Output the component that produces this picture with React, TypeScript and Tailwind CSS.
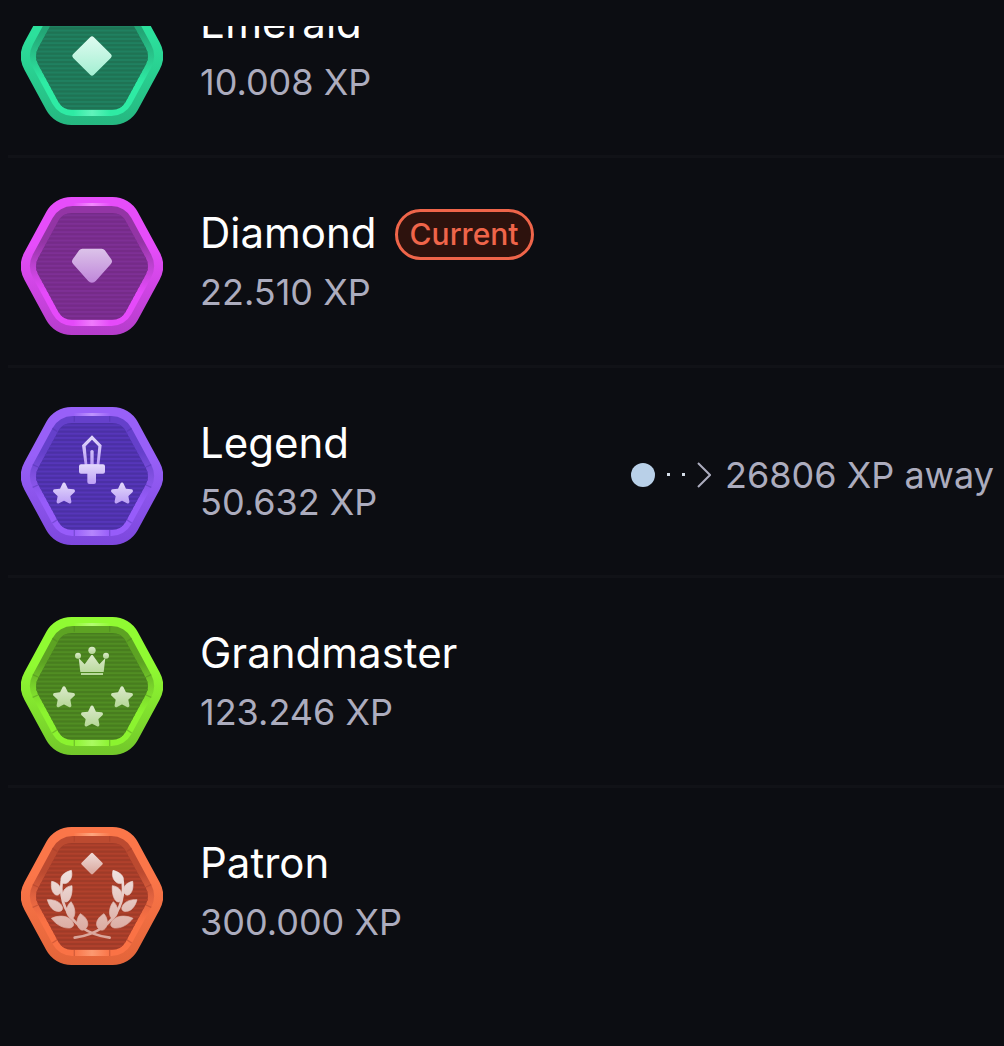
import React from "react";

type Point = [number, number];

interface Palette {
  rimTop: string;
  rimBottom: string;
  bevelTop: string;
  bevelBottom: string;
  bevelSide: string;
  core: string;
  stripe: string;
  glow: string;
  iconTop: string;
  iconBottom: string;
}

interface League {
  id: string;
  name: string;
  xp: string;
  current?: boolean;
  away?: string;
  notched?: boolean;
  palette: Palette;
  emblem: React.ReactNode;
}

/** Closed polygon path whose corners are rounded with circular arcs. */
function roundedPolygon(points: Point[], radii: number[]): string {
  const n = points.length;
  let d = "";
  for (let i = 0; i < n; i++) {
    const p = points[i];
    const a = points[(i + n - 1) % n];
    const b = points[(i + 1) % n];
    const la = Math.hypot(a[0] - p[0], a[1] - p[1]);
    const lb = Math.hypot(b[0] - p[0], b[1] - p[1]);
    const ua: Point = [(a[0] - p[0]) / la, (a[1] - p[1]) / la];
    const ub: Point = [(b[0] - p[0]) / lb, (b[1] - p[1]) / lb];
    const angle = Math.acos(ua[0] * ub[0] + ua[1] * ub[1]);
    const r = radii[i % radii.length];
    const t = r / Math.tan(angle / 2);
    const sweep = ua[0] * ub[1] - ua[1] * ub[0] < 0 ? 1 : 0;
    d += `${i === 0 ? "M" : "L"}${(p[0] + ua[0] * t).toFixed(2)} ${(p[1] + ua[1] * t).toFixed(2)}`;
    d += `A${r} ${r} 0 0 ${sweep} ${(p[0] + ub[0] * t).toFixed(2)} ${(p[1] + ub[1] * t).toFixed(2)}`;
  }
  return d + "Z";
}

/** Flat-topped hexagon centred on x = 246. */
function hexagon(top: number, bottom: number, halfWidth: number, halfFlat: number, r: number, rSide: number): string {
  const c = 246;
  const m = (top + bottom) / 2;
  return roundedPolygon(
    [
      [c - halfFlat, top],
      [c + halfFlat, top],
      [c + halfWidth, m],
      [c + halfFlat, bottom],
      [c - halfFlat, bottom],
      [c - halfWidth, m],
    ],
    [r, r, rSide, r, r, rSide],
  );
}

function star(cx: number, cy: number): string {
  const pts: Point[] = [];
  const radii: number[] = [];
  for (let i = 0; i < 10; i++) {
    const r = i % 2 === 0 ? 41 : 20;
    const t = -Math.PI / 2 + (i * Math.PI) / 5;
    pts.push([cx + r * Math.cos(t), cy + r * Math.sin(t)]);
    radii.push(i % 2 === 0 ? 5 : 1);
  }
  return roundedPolygon(pts, radii);
}

const RIM = hexagon(36, 450, 225, 113, 86, 86);
const BEVEL = hexagon(63, 423, 196, 99, 68, 74);
const CORE = hexagon(84, 404, 175, 88, 46, 52);
const STRIPES = Array.from({ length: 26 }, (_, i) => 88 + i * 12.6);

const NOTCHES = "M193 63V80M299 63V80M193 405V423M299 405V423M127 100L142 110M365 100L350 110M127 384L142 374M365 384L350 374M68 209L84 216M424 209L408 216M68 277L84 270M424 277L408 270";

function Badge({ league }: { league: League }) {
  const { id, palette: p } = league;
  return (
    <svg viewBox="33 36 426 414" className="h-[138px] w-[142px] shrink-0" role="img" aria-label={`${league.name} league`}>
      <defs>
        <linearGradient id={`${id}-rim`} x1="0" y1="0" x2="0" y2="1">
          <stop offset="0" stopColor={p.rimTop} />
          <stop offset="0.35" stopColor={p.rimTop} />
          <stop offset="1" stopColor={p.rimBottom} />
        </linearGradient>
        <linearGradient id={`${id}-bevel`} x1="0" y1="0" x2="0" y2="1">
          <stop offset="0" stopColor={p.bevelTop} />
          <stop offset="0.3" stopColor={p.bevelTop} />
          <stop offset="0.5" stopColor={p.bevelSide} />
          <stop offset="0.72" stopColor={p.bevelBottom} />
          <stop offset="1" stopColor={p.bevelBottom} />
        </linearGradient>
        <linearGradient id={`${id}-glow`} x1="0" y1="0" x2="1" y2="0">
          <stop offset="0" stopColor={p.glow} stopOpacity="0" />
          <stop offset="0.5" stopColor={p.glow} stopOpacity="1" />
          <stop offset="1" stopColor={p.glow} stopOpacity="0" />
        </linearGradient>
        <linearGradient id={`${id}-icon`} x1="0" y1="0" x2="0" y2="1">
          <stop offset="0" stopColor={p.iconTop} />
          <stop offset="1" stopColor={p.iconBottom} />
        </linearGradient>
        <clipPath id={`${id}-core`}>
          <path d={CORE} />
        </clipPath>
      </defs>
      <path d={RIM} fill={`url(#${id}-rim)`} />
      <path d={BEVEL} fill={`url(#${id}-bevel)`} />
      <rect x="190" y="54" width="112" height="9" fill={`url(#${id}-glow)`} />
      <rect x="190" y="404" width="112" height="19" fill={`url(#${id}-glow)`} opacity="0.75" />
      {league.notched && <path d={NOTCHES} stroke={p.core} strokeOpacity="0.4" strokeWidth="4" fill="none" />}
      <path d={CORE} fill={p.core} />
      <g clipPath={`url(#${id}-core)`} fill={p.stripe}>
        {STRIPES.map((y) => (
          <rect key={y} x="70" y={y} width="352" height="6" />
        ))}
      </g>
      <g fill={`url(#${id}-icon)`}>{league.emblem}</g>
    </svg>
  );
}

const LAUREL_LEAVES = [
  "M184 166C162 172 150 184 153 198C156 207 166 208 174 202C184 194 188 182 184 166Z",
  "M125 199C144 203 153 214 152 228C151 238 144 243 136 239C126 233 122 217 125 199Z",
  "M186 212C167 214 157 227 157 243C157 254 162 262 169 261C181 258 188 236 186 212Z",
  "M112 254C134 253 152 261 157 276C160 287 151 291 140 289C126 285 117 272 112 254Z",
  "M183 260C170 272 166 288 173 301C178 310 185 314 190 308C198 297 195 275 183 260Z",
  "M124 310C146 300 170 301 184 315C194 326 193 336 180 339C159 341 139 329 124 310Z",
  "M211 296C200 310 198 325 205 337C212 348 220 347 226 342C241 329 232 308 211 296Z",
];

function LaurelSide() {
  return (
    <>
      <g fill="url(#laurel)" stroke="url(#laurel)" strokeWidth="2" strokeLinejoin="round">
        {LAUREL_LEAVES.map((d) => (
          <path key={d} d={d} />
        ))}
      </g>
      <path
        d="M155 200C148 255 170 305 213 336C236 352 266 364 299 368"
        fill="none"
        stroke="url(#laurel)"
        strokeWidth="8"
        strokeLinecap="round"
      />
    </>
  );
}

const LEAGUES: League[] = [
  {
    id: "emerald",
    name: "Emerald",
    xp: "10.008 XP",
    palette: {
      rimTop: "#2ce09c", rimBottom: "#25b780", bevelTop: "#23a676", bevelBottom: "#2eeba4", bevelSide: "#29c58b",
      core: "#1f7354", stripe: "#208060", glow: "#71f6c3", iconTop: "#dffbf0", iconBottom: "#a3efd2",
    },
    emblem: <path d={roundedPolygon([[246, 181], [308, 243], [246, 305], [184, 243]], [8])} />,
  },
  {
    id: "diamond",
    name: "Diamond",
    xp: "22.510 XP",
    current: true,
    palette: {
      rimTop: "#e64dfa", rimBottom: "#b53ccb", bevelTop: "#9335a5", bevelBottom: "#e54afa", bevelSide: "#bd42d1",
      core: "#752b88", stripe: "#7e3095", glow: "#f38bfd", iconTop: "#dcc3e9", iconBottom: "#bf86da",
    },
    emblem: <path d={roundedPolygon([[211, 191], [281, 191], [309, 230], [246, 301], [183, 230]], [12, 12, 12, 15, 12])} />,
  },
  {
    id: "legend",
    name: "Legend",
    xp: "50.632 XP",
    away: "26806 XP away",
    notched: true,
    palette: {
      rimTop: "#9860f8", rimBottom: "#7d47dd", bevelTop: "#6540cb", bevelBottom: "#975cfa", bevelSide: "#8050e0",
      core: "#4b30a5", stripe: "#5636b9", glow: "#bf94fe", iconTop: "#e3dafb", iconBottom: "#bc9ff6",
    },
    emblem: (
      <>
        <path fillRule="evenodd" d="M246 121L275 151L268 210H224L216 151ZM246 134L227 154L232 208H241V168Q246 162 251 168V208H260L265 154Z" />
        <path d="M213 208H279Q285 208 285 214V230Q285 236 279 236H258V261Q258 267 252 267H238Q232 267 232 261V236H213Q207 236 207 230V214Q207 208 213 208Z" />
        <path d={star(162, 297)} />
        <path d={star(336, 297)} />
      </>
    ),
  },
  {
    id: "grandmaster",
    name: "Grandmaster",
    xp: "123.246 XP",
    notched: true,
    palette: {
      rimTop: "#90fb32", rimBottom: "#72c72a", bevelTop: "#5da323", bevelBottom: "#8bf32f", bevelSide: "#78d12b",
      core: "#487d1f", stripe: "#518d23", glow: "#b4fd72", iconTop: "#dceacb", iconBottom: "#b5d797",
    },
    emblem: (
      <>
        <path d="M206 159L224 178L244 150H248L268 178L286 159L281 201H211ZM213 204H279V210H213Z" />
        <circle cx="246" cy="136" r="11" />
        <circle cx="204" cy="152" r="9" />
        <circle cx="288" cy="152" r="9" />
        <path d={star(162, 278)} />
        <path d={star(336, 278)} />
        <path d={star(246, 336)} />
      </>
    ),
  },
  {
    id: "patron",
    name: "Patron",
    xp: "300.000 XP",
    notched: true,
    palette: {
      rimTop: "#fb7649", rimBottom: "#e36439", bevelTop: "#bc4a30", bevelBottom: "#fa7245", bevelSide: "#e0623f",
      core: "#9f3b28", stripe: "#b0412c", glow: "#fda67f", iconTop: "#efdcd9", iconBottom: "#d9a59b",
    },
    emblem: (
      <>
        <linearGradient id="laurel" gradientUnits="userSpaceOnUse" x1="0" y1="166" x2="0" y2="372">
          <stop offset="0" stopColor="#f0e3e1" />
          <stop offset="1" stopColor="#d9a398" />
        </linearGradient>
        <path d={roundedPolygon([[246, 112], [280, 146], [246, 180], [212, 146]], [4])} />
        <LaurelSide />
        <g transform="translate(493 0) scale(-1 1)">
          <LaurelSide />
        </g>
      </>
    ),
  },
];

function Distance({ label }: { label: string }) {
  return (
    <div className="ml-auto flex items-center pb-0.5 text-[#acacbe]">
      <span className="size-6 rounded-full bg-[#b9d0e8]" />
      <span className="ml-3 size-[3px] bg-[#d5dde8]" />
      <span className="ml-3 size-[3px] bg-[#d5dde8]" />
      <svg viewBox="0 0 14 26" className="ml-3 h-[26px] w-[14px]" fill="none" stroke="currentColor" strokeWidth="2" aria-hidden="true">
        <path d="M1 1L13 13L1 25" />
      </svg>
      <span className="ml-3.5 text-4xl whitespace-nowrap">{label}</span>
    </div>
  );
}

export default function App() {
  return (
    <main className="min-h-screen bg-[#0c0d12] pt-[26px] font-['Inter',sans-serif]">
      <div className="overflow-hidden pb-10">
        <ul className="-mt-[78px] ml-2">
          {LEAGUES.map((league) => (
            <li
              key={league.id}
              className="flex h-[210px] items-center border-b-[3px] border-[#111217] pt-2 pr-2.5 pl-[13px] last:border-transparent"
            >
              <Badge league={league} />
              <div className="ml-[37px] pb-2">
                <div className="flex h-[60px] items-center gap-[18px]">
                  <h2 className="text-[42px] leading-[60px] text-white">{league.name}</h2>
                  {league.current && (
                    <span className="mt-1 flex h-[51px] items-center rounded-full border-[3px] border-[#ef654a] bg-[#2d120d] px-3 text-[30px] font-medium text-[#ef654a]">
                      Current
                    </span>
                  )}
                </div>
                <p className="text-4xl leading-[58px] text-[#acacbe]">{league.xp}</p>
              </div>
              {league.away && <Distance label={league.away} />}
            </li>
          ))}
        </ul>
      </div>
    </main>
  );
}
